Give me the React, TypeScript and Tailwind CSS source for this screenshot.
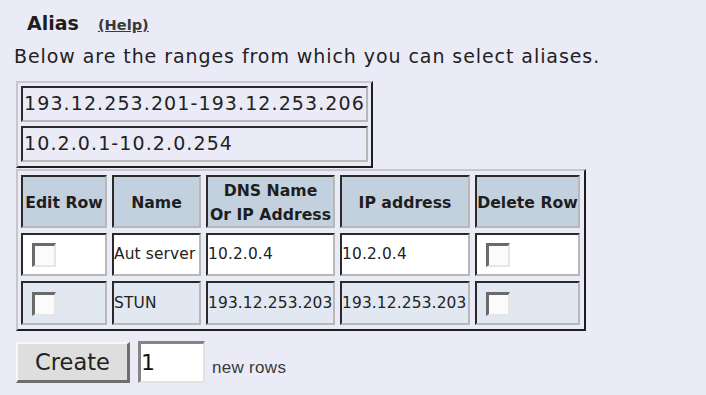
import React from "react";

const cellBorder =
  "border-2 border-t-[#2a2a2a] border-l-[#2a2a2a] border-r-[#b8b8b8] border-b-[#b8b8b8]";
const outerBorder =
  "border-2 border-t-[#c6c6cc] border-l-[#c6c6cc] border-r-[#1e1e1e] border-b-[#1e1e1e]";

function Check() {
  return (
    <div className="ml-[9px] h-[24px] w-[24px] border-t-[3px] border-l-[3px] border-r-2 border-b-2 border-t-[#6a6a6a] border-l-[#6a6a6a] border-r-[#e6e6e6] border-b-[#e6e6e6] bg-[#fbfbfb]" />
  );
}

function Head({ children }: { children: React.ReactNode }) {
  return (
    <div
      className={`${cellBorder} bg-[#c3d1de] flex items-center justify-center text-center font-bold text-[15.7px] leading-[24px] pt-[3px] text-[#1e1e1e]`}
    >
      {children}
    </div>
  );
}

function Cell({ children, bg }: { children?: React.ReactNode; bg: string }) {
  return (
    <div
      className={`${cellBorder} ${bg} flex items-center text-[15.4px] tracking-[0.15px] pt-[1px] whitespace-nowrap overflow-hidden`}
    >
      {children}
    </div>
  );
}

const rows = [
  { name: "Aut server", dns: "10.2.0.4", ip: "10.2.0.4", bg: "bg-white" },
  { name: "STUN", dns: "193.12.253.203", ip: "193.12.253.203", bg: "bg-[#e1e8f2]" },
];

export default function App() {
  return (
    <div className="w-[706px] h-[395px] bg-[#ebebf7] pl-4 pt-3 font-['DejaVu_Sans',sans-serif] text-[#222]">
      <div className="ml-[11px] flex items-baseline h-[22px] leading-[22px]">
        <span className="text-[19px] font-bold text-[#1e1e1e]">Alias</span>
        <a className="ml-[19px] text-[14.6px] font-bold underline text-[#3a3a3a]">(Help)</a>
      </div>
      <p className="mt-[11px] -ml-[2px] text-[19px] leading-[22px] tracking-[0.93px] whitespace-nowrap">
        Below are the ranges from which you can select aliases.
      </p>

      <div className={`mt-[14px] w-[357px] h-[87px] ${outerBorder} p-[3px] flex flex-col gap-[4px]`}>
        {["193.12.253.201-193.12.253.206", "10.2.0.1-10.2.0.254"].map((t) => (
          <div
            key={t}
            className={`${cellBorder} h-[36px] pl-[1px] pt-[4px] text-[19px] leading-[22px] tracking-[1.1px] whitespace-nowrap overflow-hidden`}
          >
            {t}
          </div>
        ))}
      </div>

      <div
        className={`mt-[1px] w-fit ${outerBorder} pl-[3px] pr-[4px] pt-[4px] pb-[4px] grid grid-cols-[86px_89px_129px_130px_105px] grid-rows-[53px_43px_44px] gap-[5px]`}
      >
        <Head>Edit Row</Head>
        <Head>Name</Head>
        <Head>
          DNS Name
          <br />
          Or IP Address
        </Head>
        <Head>IP address</Head>
        <Head>Delete Row</Head>
        {rows.map((r) => (
          <React.Fragment key={r.name}>
            <Cell bg={r.bg}>
              <Check />
            </Cell>
            <Cell bg={r.bg}>{r.name}</Cell>
            <Cell bg={r.bg}>{r.dns}</Cell>
            <Cell bg={r.bg}>{r.ip}</Cell>
            <Cell bg={r.bg}>
              <Check />
            </Cell>
          </React.Fragment>
        ))}
      </div>

      <div className="mt-[10px] flex items-start">
        <button className="mt-px w-[114px] h-[41px] border-t-2 border-l-2 border-r-[3px] border-b-[3px] border-t-[#f8f8f8] border-l-[#f8f8f8] border-r-[#6e6e6e] border-b-[#6e6e6e] bg-[#dedede] text-[22.5px] leading-none text-[#222] flex items-center justify-center">
          Create
        </button>
        <div className="ml-[8px] w-[67px] h-[42px] border-t-[3px] border-l-[3px] border-r-2 border-b-2 border-t-[#858585] border-l-[#858585] border-r-[#e2e2e2] border-b-[#e2e2e2] bg-white flex items-center text-[22px] leading-none text-[#111]">
          1
        </div>
        <span className="ml-[7px] mt-[17px] font-['Liberation_Sans',sans-serif] text-[17px] leading-[20px] tracking-[0.3px] text-[#3a3a3a]">
          new rows
        </span>
      </div>
    </div>
  );
}
